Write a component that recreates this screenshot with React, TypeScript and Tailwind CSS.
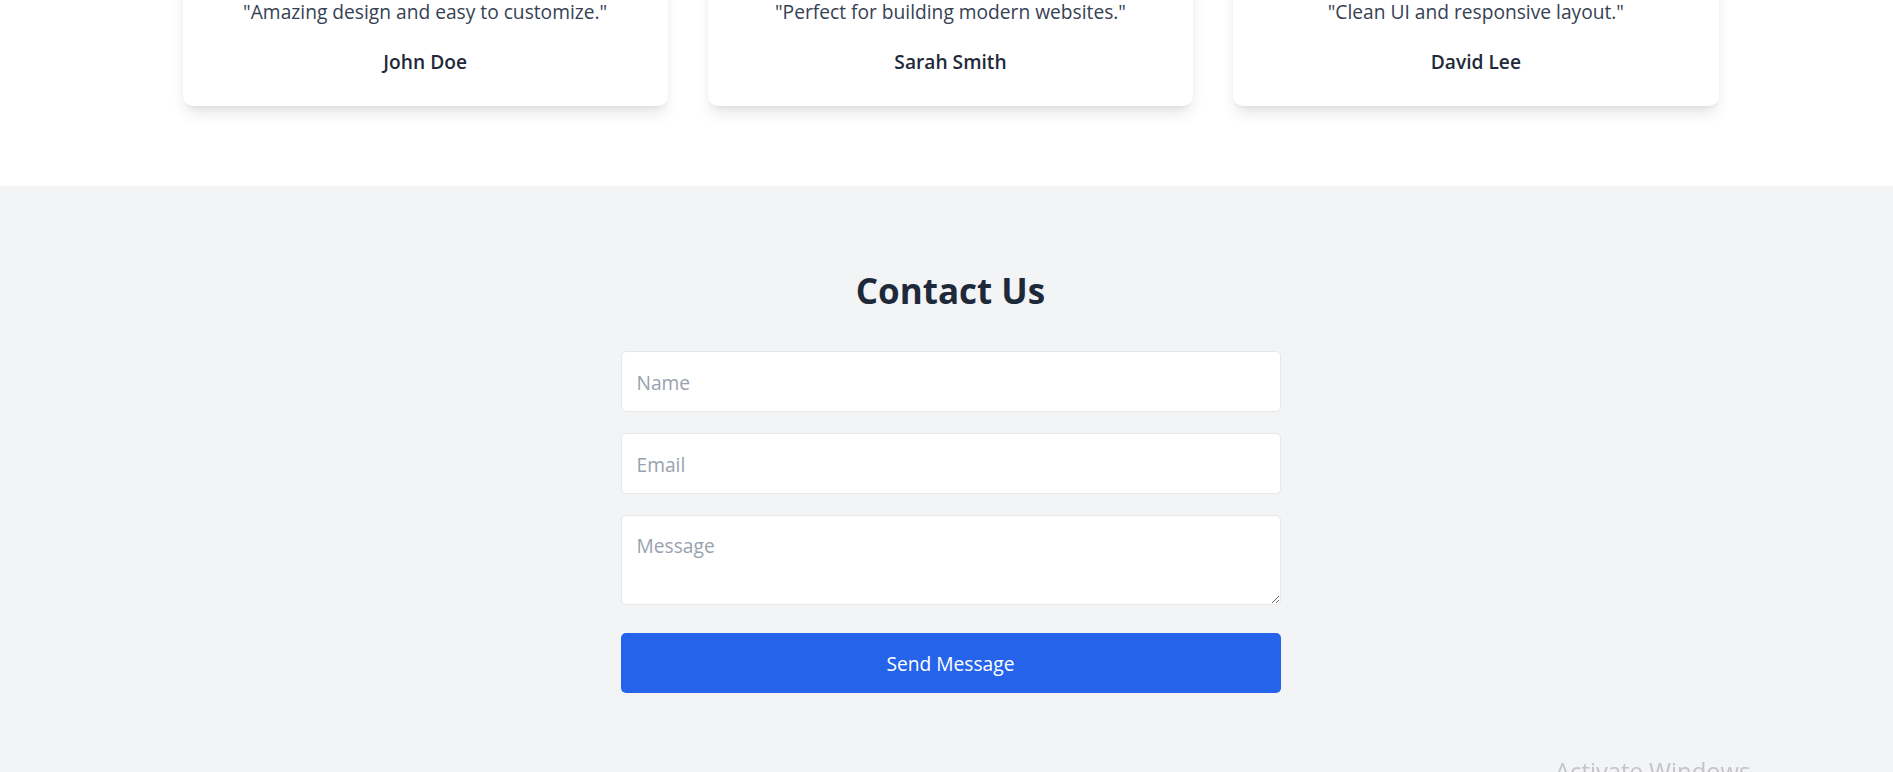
import React from "react";

const testimonials = [
  { quote: '"Amazing design and easy to customize."', name: "John Doe" },
  { quote: '"Perfect for building modern websites."', name: "Sarah Smith" },
  { quote: '"Clean UI and responsive layout."', name: "David Lee" },
];

export default function App() {
  return (
    <div
      className="min-h-screen bg-gray-100 overflow-hidden"
      style={{ fontFamily: '"Segoe UI", "Open Sans", "Liberation Sans", sans-serif' }}
    >
      <section className="bg-white pl-2 pb-[80px] -mt-[31px]">
        <div className="mx-auto max-w-[1536px] grid grid-cols-3 gap-[40px]">
          {testimonials.map((t) => (
            <div
              key={t.name}
              className="bg-white rounded-[10px] shadow-lg px-[29px] pt-[29px] pb-[29px] text-center"
            >
              <p className="text-[19.2px] leading-[28.8px] text-gray-700">{t.quote}</p>
              <h4 className="mt-[21px] text-[19.2px] leading-[28.8px] font-semibold text-gray-800">
                {t.name}
              </h4>
            </div>
          ))}
        </div>
      </section>

      <section className="bg-gray-100 pl-2 pt-[83px] pb-[80px]">
        <h2 className="text-center text-[35px] leading-[43px] font-bold text-gray-800 mb-[39px]">
          Contact Us
        </h2>
        <form className="mx-auto w-[660px] flex flex-col gap-[21px]">
          <input
            type="text"
            placeholder="Name"
            className="h-[61px] px-[15px] pt-[2px] bg-white border border-gray-200 rounded-[5px] text-[19.2px] text-gray-800 placeholder:text-gray-400 outline-none"
          />
          <input
            type="email"
            placeholder="Email"
            className="h-[61px] px-[15px] pt-[2px] bg-white border border-gray-200 rounded-[5px] text-[19.2px] text-gray-800 placeholder:text-gray-400 outline-none"
          />
          <textarea
            placeholder="Message"
            className="h-[90px] px-[15px] pt-[16px] pb-[12px] leading-[28.8px] bg-white border border-gray-200 rounded-[5px] text-[19.2px] text-gray-800 placeholder:text-gray-400 outline-none"
          />
          <button
            type="button"
            className="mt-[7px] h-[60px] pt-[4px] bg-[#2563eb] text-white rounded-[5px] text-[19.2px]"
          >
            Send Message
          </button>
        </form>
      </section>

      <div className="fixed left-[1555px] top-[760px] text-[23.8px] leading-none text-[#c4c4c6] pointer-events-none">
        Activate Windows
      </div>
    </div>
  );
}
